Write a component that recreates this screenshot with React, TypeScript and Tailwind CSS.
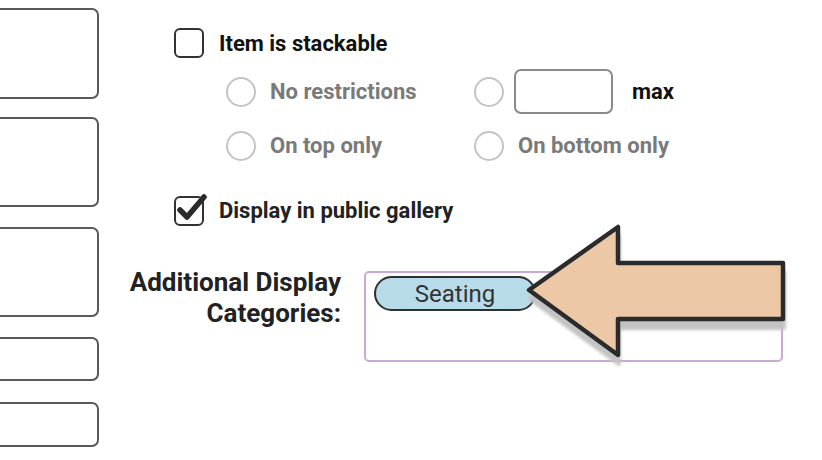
import React from "react";

function Radio() {
  return <span className="block w-[30px] h-[30px] rounded-full border-2 border-[#c4c4c4] bg-white shrink-0" />;
}

export default function App() {
  return (
    <div className="relative w-[822px] h-[460px] bg-white overflow-hidden flex font-['Roboto',sans-serif]">
      <div className="flex flex-col -ml-[20px] w-[119px] shrink-0 pt-[8px]">
        <div className="h-[91px] w-full rounded-[7px] border-2 border-[#5a5a5a]" />
        <div className="h-[90px] mt-[18px] w-full rounded-[7px] border-2 border-[#5a5a5a]" />
        <div className="h-[90px] mt-[20px] w-full rounded-[7px] border-2 border-[#5a5a5a]" />
        <div className="h-[44px] mt-[20px] w-full rounded-[7px] border-2 border-[#5a5a5a]" />
        <div className="h-[45px] mt-[21px] w-full rounded-[7px] border-2 border-[#5a5a5a]" />
      </div>

      <div className="flex flex-col pt-[28px]">
        <div className="ml-[75px] flex items-center h-[30px]">
          <span className="block w-[30px] h-[30px] rounded-[6px] border-2 border-[#333]" />
          <span className="ml-[15px] text-[22px] font-bold text-[#111]">Item is stackable</span>
        </div>

        <div className="ml-[127px] mt-[11px] grid grid-cols-[248px_auto] gap-y-[9px]">
          <div className="flex items-center h-[45px]">
            <Radio />
            <span className="ml-[14px] text-[22px] font-bold text-[#7a7a7a]">No restrictions</span>
          </div>
          <div className="flex items-center h-[45px]">
            <Radio />
            <span className="ml-[10px] block w-[99px] h-[45px] rounded-[7px] border-2 border-[#8a8a8a]" />
            <span className="ml-[19px] text-[22px] font-bold text-[#111]">max</span>
          </div>
          <div className="flex items-center h-[45px]">
            <Radio />
            <span className="ml-[14px] text-[22px] font-bold text-[#7a7a7a]">On top only</span>
          </div>
          <div className="flex items-center h-[45px]">
            <Radio />
            <span className="ml-[14px] text-[22px] font-bold text-[#7a7a7a]">On bottom only</span>
          </div>
        </div>

        <div className="ml-[75px] mt-[27px] flex items-center h-[31px]">
          <span className="relative block w-[30px] h-[30px] rounded-[6px] border-2 border-[#333]">
            <svg className="absolute -left-[1px] -top-[5px]" width="36" height="32" viewBox="0 0 36 32">
              <path d="M5 17 L12 24 L29 4" fill="none" stroke="#2a2a2a" strokeWidth="5.5" strokeLinecap="round" strokeLinejoin="round" />
            </svg>
          </span>
          <span className="ml-[15px] text-[22px] font-bold text-[#222]">Display in public gallery</span>
        </div>

        <div className="mt-[45px] flex items-start">
          <div className="w-[242px] text-right text-[26px] font-bold leading-[31px] text-[#222] -mt-[4px]">
            Additional Display
            <br />
            Categories:
          </div>
          <div className="ml-[23px] w-[419px] h-[91px] rounded-[5px] border-2 border-[#c9a9d6] pt-[3px] pl-[8px]">
            <div className="w-[162px] h-[35px] rounded-full border-2 border-[#2f2f2f] bg-[#b8dbea] flex items-center justify-center text-[24px] text-[#333]">
              Seating
            </div>
          </div>
        </div>
      </div>

      <svg className="absolute left-[500px] top-[210px]" width="300" height="170" viewBox="500 210 300 170">
        <defs>
          <filter id="sh" x="-10%" y="-10%" width="130%" height="140%">
            <feGaussianBlur stdDeviation="1.5" />
          </filter>
        </defs>
        <path
          d="M529 290 L618 227 L618 263 L783 263 L783 319 L618 319 L618 355 Z"
          transform="translate(1 9)"
          fill="#c3c3c3"
          stroke="#c3c3c3"
          strokeWidth="4"
          strokeLinejoin="round"
          filter="url(#sh)"
        />
        <path
          d="M529 290 L618 227 L618 263 L783 263 L783 319 L618 319 L618 355 Z"
          fill="#ecc8a6"
          stroke="#2b2b2b"
          strokeWidth="4.5"
          strokeLinejoin="round"
        />
      </svg>
    </div>
  );
}
